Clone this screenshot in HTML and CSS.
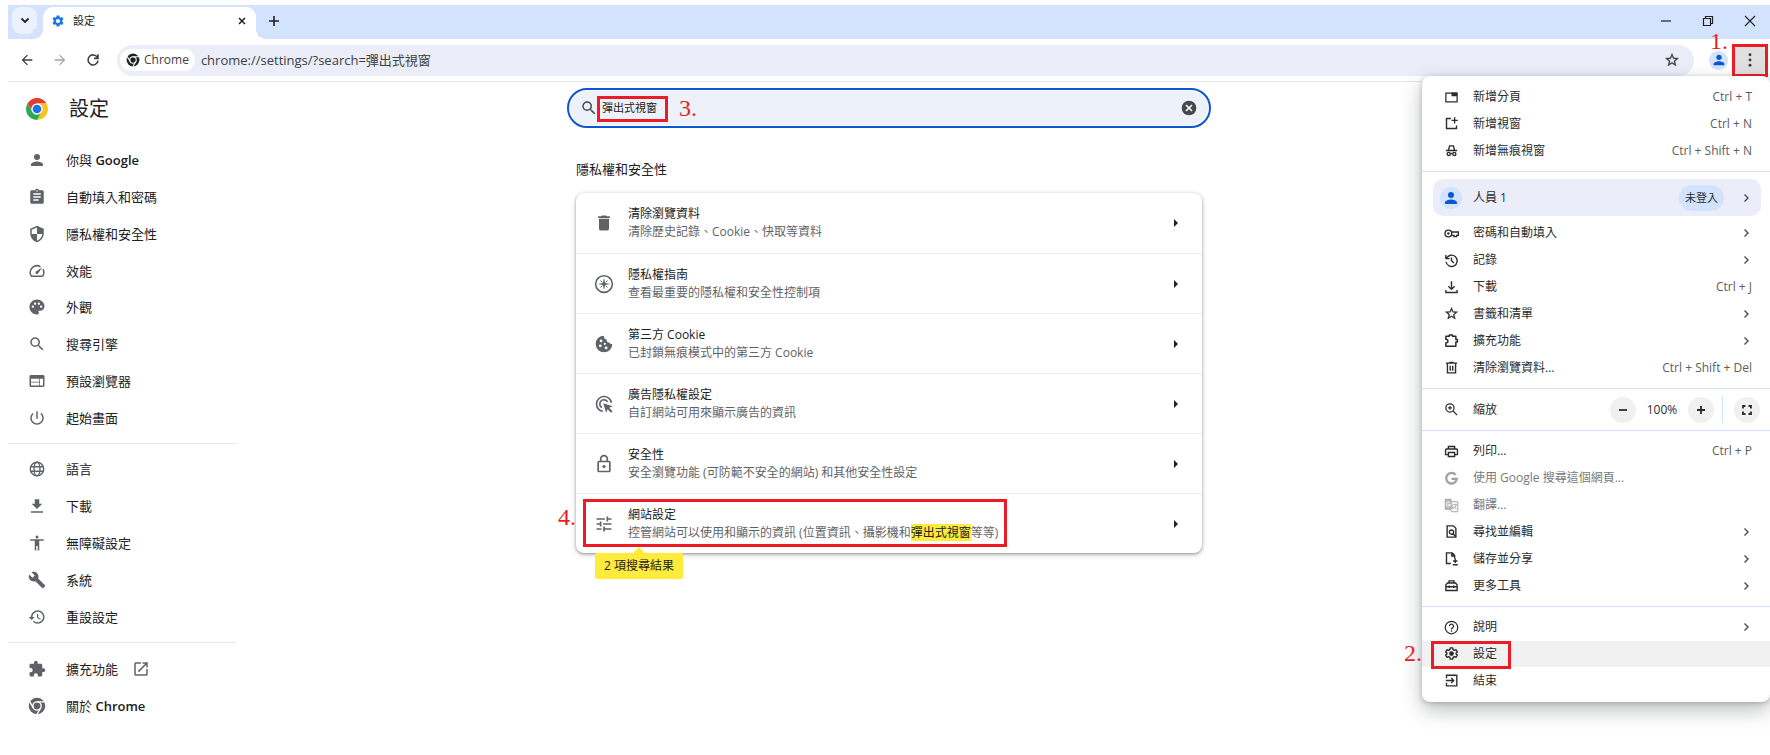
FILE: index.html
```html
<!DOCTYPE html>
<html lang="zh-Hant">
<head>
<meta charset="utf-8">
<title>設定</title>
<link rel="stylesheet" href="styles.css">
</head>
<body>
<svg class="sprite" aria-hidden="true">
  <symbol id="person" viewBox="0 0 24 24"><circle cx="12" cy="8" r="4"/><path d="M12 14c-2.670 0-8 1.340-8 4v2h16v-2c0-2.660-5.330-4-8-4z"/></symbol>
  <symbol id="assignment" viewBox="0 0 24 24"><path d="M19 3h-4.180C14.400 1.840 13.300 1 12 1c-1.300 0-2.400.840-2.820 2H5c-1.100 0-2 .9-2 2v14c0 1.100.9 2 2 2h14c1.100 0 2-.9 2-2V5c0-1.100-.9-2-2-2zm-7 0c.55 0 1 .45 1 1s-.45 1-1 1-1-.45-1-1 .45-1 1-1zm2 14H7v-2h7v2zm3-4H7v-2h10v2zm0-4H7V7h10v2z"/></symbol>
  <symbol id="shield" viewBox="0 0 24 24"><path d="M12 1L3 5v6c0 5.550 3.840 10.740 9 12 5.160-1.260 9-6.450 9-12V5l-9-4zm0 10.990h7c-.53 4.120-3.280 7.790-7 8.940V12H5V6.300l7-3.110v8.800z"/></symbol>
  <symbol id="speed" viewBox="0 0 24 24"><path d="M20.380 8.570l-1.230 1.850a8 8 0 0 1-.22 7.580H5.070A8 8 0 0 1 15.580 6.850l1.850-1.230A10 10 0 0 0 3.350 19a2 2 0 0 0 1.720 1h13.850a2 2 0 0 0 1.740-1 10 10 0 0 0-.27-10.440zm-9.790 6.840a2 2 0 0 0 2.830 0l5.660-8.490-8.490 5.660a2 2 0 0 0 0 2.830z"/></symbol>
  <symbol id="palette" viewBox="0 0 24 24"><path d="M12 2C6.490 2 2 6.490 2 12s4.490 10 10 10c1.380 0 2.500-1.120 2.500-2.500 0-.61-.23-1.200-.64-1.670-.08-.1-.13-.21-.13-.33 0-.28.22-.5.5-.5H16c3.310 0 6-2.690 6-6 0-4.960-4.490-9-10-9zm5.500 11c-.83 0-1.500-.67-1.500-1.500s.67-1.500 1.500-1.500 1.500.67 1.500 1.500-.67 1.500-1.500 1.500zm-3-4c-.83 0-1.500-.67-1.500-1.500S13.670 6 14.500 6s1.500.67 1.500 1.500S15.330 9 14.500 9zM5 11.500c0-.83.67-1.500 1.500-1.500s1.500.67 1.500 1.500S7.330 13 6.500 13 5 12.330 5 11.500zm6-4c0 .83-.67 1.500-1.500 1.500S8 8.330 8 7.500 8.670 6 9.500 6s1.500.67 1.500 1.500z"/></symbol>
  <symbol id="search" viewBox="0 0 24 24"><path d="M15.500 14h-.79l-.28-.27A6.470 6.470 0 0 0 16 9.500 6.500 6.500 0 1 0 9.500 16c1.610 0 3.090-.59 4.230-1.570l.27.28v.79l5 4.990L20.490 19l-4.990-5zm-6 0C7.010 14 5 11.990 5 9.500S7.010 5 9.500 5 14 7.010 14 9.500 11.990 14 9.500 14z"/></symbol>
  <symbol id="zoomin" viewBox="0 0 24 24"><g fill="none" stroke="currentColor" stroke-width="2"><circle cx="9.500" cy="9.500" r="6.500"/><path d="M14.500 14.500l6.500 6.500M9.500 6.500v6M6.500 9.500h6"/></g></symbol>
  <symbol id="web" viewBox="0 0 24 24"><path d="M20 4H4c-1.100 0-2 .9-2 2v12c0 1.100.9 2 2 2h16c1.100 0 2-.9 2-2V6c0-1.100-.9-2-2-2zm-5 14H4v-4h11v4zm0-5H4V9h11v4zm5 5h-4V9h4v9z"/></symbol>
  <symbol id="power" viewBox="0 0 24 24"><path d="M13 3h-2v10h2V3zm4.830 2.170l-1.420 1.420C17.990 7.860 19 9.810 19 12c0 3.870-3.130 7-7 7s-7-3.130-7-7c0-2.190 1.010-4.140 2.580-5.420L6.170 5.170C4.230 6.820 3 9.260 3 12c0 4.970 4.030 9 9 9s9-4.030 9-9c0-2.740-1.230-5.180-3.170-6.830z"/></symbol>
  <symbol id="globe" viewBox="0 0 24 24"><g fill="none" stroke="currentColor" stroke-width="1.800"><circle cx="12" cy="12" r="9"/><ellipse cx="12" cy="12" rx="4" ry="9"/><path d="M3.700 9h16.600M3.700 15h16.600"/></g></symbol>
  <symbol id="download" viewBox="0 0 24 24"><path d="M4 21h16v-2H4v2zM19 9h-4V3H9v6H5l7 7 7-7z"/></symbol>
  <symbol id="access" viewBox="0 0 24 24"><circle cx="12" cy="4" r="2"/><path d="M21 9h-6v13h-2v-6h-2v6H9V9H3V7h18v2z"/></symbol>
  <symbol id="wrench" viewBox="0 0 24 24"><path d="M22.700 19l-9.100-9.100c.9-2.300.4-5-1.500-6.900-2-2-5-2.400-7.400-1.300L9 6 6 9 1.600 4.700C.4 7.100.9 10.100 2.900 12.100c1.900 1.900 4.600 2.400 6.900 1.500l9.100 9.100c.4.4 1 .4 1.400 0l2.300-2.300c.5-.4.5-1.100.1-1.400z"/></symbol>
  <symbol id="history" viewBox="0 0 24 24"><path d="M13 3c-4.970 0-9 4.030-9 9H1l3.890 3.890.07.14L9 12H6c0-3.870 3.130-7 7-7s7 3.130 7 7-3.130 7-7 7c-1.930 0-3.680-.79-4.940-2.060l-1.420 1.420C8.270 19.990 10.510 21 13 21c4.970 0 9-4.030 9-9s-4.030-9-9-9zm-1 5v5l4.280 2.540.72-1.210-3.500-2.080V8H12z"/></symbol>
  <symbol id="puzzle" viewBox="0 0 24 24"><path d="M20.500 11H19V7c0-1.100-.9-2-2-2h-4V3.500C13 2.120 11.880 1 10.500 1S8 2.120 8 3.500V5H4c-1.100 0-2 .9-2 2v3.800h1.500c1.490 0 2.700 1.210 2.700 2.700s-1.210 2.700-2.700 2.700H2V20c0 1.100.9 2 2 2h3.800v-1.500c0-1.490 1.210-2.700 2.700-2.700 1.490 0 2.700 1.210 2.700 2.700V22H17c1.100 0 2-.9 2-2v-4h1.500c1.380 0 2.500-1.120 2.500-2.500S21.880 11 20.500 11z"/></symbol>
  <symbol id="external" viewBox="0 0 24 24"><path d="M19 19H5V5h7V3H5c-1.110 0-2 .9-2 2v14c0 1.100.89 2 2 2h14c1.100 0 2-.9 2-2v-7h-2v7zM14 3v2h3.590l-9.830 9.830 1.410 1.410L19 6.410V10h2V3h-7z"/></symbol>
  <symbol id="trash" viewBox="0 0 24 24"><path d="M6 19c0 1.100.9 2 2 2h8c1.100 0 2-.9 2-2V7H6v12zM19 4h-3.500l-1-1h-5l-1 1H5v2h14V4z"/></symbol>
  <symbol id="compass" viewBox="0 0 24 24"><circle cx="12" cy="12" r="10" fill="none" stroke="currentColor" stroke-width="1.900"/><path d="M12 4.500l1.300 6.200L19.500 12l-6.200 1.300L12 19.500l-1.300-6.200L4.500 12l6.200-1.300z"/><path d="M7.800 7.800l2.200 2.200M16.200 7.800L14 10M7.800 16.200L10 14M16.200 16.200L14 14" stroke="currentColor" stroke-width="1.200"/></symbol>
  <symbol id="cookie" viewBox="0 0 24 24"><path fill-rule="evenodd" d="M12 2a10 10 0 1 0 10 10c-1.600.4-2.900-.3-3.300-1.900-2.300.6-3.800-.8-3.300-3.100C12.900 6.500 11.700 4.400 12 2zM8.500 6.700a1.600 1.600 0 1 1 0 3.200 1.600 1.600 0 0 1 0-3.200zM7.500 12.500a1.700 1.700 0 1 1 0 3.400 1.700 1.700 0 0 1 0-3.400zM13 10.500a1.300 1.300 0 1 1 0 2.600 1.300 1.300 0 0 1 0-2.600zM14.500 15a1.700 1.700 0 1 1 0 3.400 1.700 1.700 0 0 1 0-3.400z"/></symbol>
  <symbol id="ads" viewBox="0 0 24 24"><g fill="none" stroke="currentColor" stroke-width="2"><path d="M10.500 20.900A9 9 0 1 1 20.900 10.500"/><path d="M9.500 16.300A5 5 0 1 1 16.300 9.500"/></g><path d="M11 11l11.500 3.700-4.300 1.900 4 4-1.800 1.800-4-4-1.800 4.200z"/></symbol>
  <symbol id="lock" viewBox="0 0 24 24"><g fill="none" stroke="currentColor" stroke-width="2"><rect x="5" y="9" width="14" height="12" rx="1"/><path d="M8 9V6a4 4 0 0 1 8 0v3"/></g><circle cx="12" cy="15" r="1.900"/></symbol>
  <symbol id="tune" viewBox="0 0 24 24"><path d="M3 17v2h6v-2H3zM3 5v2h10V5H3zm10 16v-2h8v-2h-8v-2h-2v6h2zM7 9v2H3v2h4v2h2V9H7zm14 4v-2H11v2h10zm-6-4h2V7h4V5h-4V3h-2v6z"/></symbol>
  <symbol id="gear" viewBox="0 0 24 24"><path d="M19.140 12.940c.04-.3.06-.61.06-.94 0-.32-.02-.64-.07-.94l2.030-1.580c.18-.14.23-.41.12-.61l-1.920-3.320c-.12-.22-.37-.29-.59-.22l-2.390.96c-.5-.38-1.030-.7-1.620-.94l-.36-2.540c-.04-.24-.24-.41-.48-.41h-3.840c-.24 0-.43.17-.47.41l-.36 2.540c-.59.24-1.130.57-1.620.94l-2.390-.96c-.22-.08-.47 0-.59.22L2.740 8.870c-.12.21-.08.47.12.61l2.030 1.580c-.05.3-.09.63-.09.94s.02.64.07.94l-2.030 1.580c-.18.14-.23.41-.12.61l1.920 3.320c.12.22.37.29.59.22l2.390-.96c.5.38 1.030.7 1.620.94l.36 2.540c.05.24.24.41.48.41h3.840c.24 0 .44-.17.47-.41l.36-2.540c.59-.24 1.130-.56 1.620-.94l2.390.96c.22.08.47 0 .59-.22l1.920-3.320c.12-.22.07-.47-.12-.61l-2.010-1.580zM12 15.600c-1.980 0-3.600-1.620-3.600-3.600s1.620-3.600 3.600-3.600 3.600 1.620 3.600 3.600-1.620 3.600-3.600 3.600z"/></symbol>
  <symbol id="gearline" viewBox="0 0 24 24"><path fill="none" stroke="currentColor" stroke-width="2.200" stroke-linejoin="round" d="M10 3h4l.6 2.900 1.900 1.100 2.800-1 2 3.500L19.200 11.500v1l2.100 2-2 3.500-2.800-1-1.900 1.100L14 21h-4l-.6-2.900L7.500 17l-2.800 1-2-3.500 2.100-2v-1l-2.100-2 2-3.500 2.800 1 1.900-1.100z"/><circle cx="12" cy="12" r="3.800"/></symbol>
  <symbol id="star" viewBox="0 0 24 24"><path stroke="currentColor" stroke-width=".5" d="M22 9.240l-7.190-.62L12 2 9.190 8.630 2 9.240l5.460 4.730L5.820 21 12 17.270 18.180 21l-1.630-7.030L22 9.240zM12 15.400l-3.760 2.270 1-4.280-3.320-2.880 4.380-.38L12 6.100l1.710 4.040 4.380.38-3.320 2.880 1 4.280L12 15.400z"/></symbol>
  <symbol id="tab" viewBox="0 0 24 24"><path fill="none" stroke="currentColor" stroke-width="2" d="M3 5h18v14H3z"/><path d="M12 4h9v6h-9z"/></symbol>
  <symbol id="newwin" viewBox="0 0 24 24"><path fill="none" stroke="currentColor" stroke-width="2.200" d="M11 4H4v16h16v-5M17 2v10M12 7h10"/></symbol>
  <symbol id="incognito" viewBox="0 0 24 24"><g fill="none" stroke="currentColor" stroke-width="2.200"><path d="M3 12h18M7 12L9 4.500h6l2 7.500M10 17.500q2-1.500 4 0"/><circle cx="7.500" cy="17.500" r="2.500"/><circle cx="16.500" cy="17.500" r="2.500"/></g></symbol>
  <symbol id="key" viewBox="0 0 24 24"><g fill="none" stroke="currentColor" stroke-width="2.200"><circle cx="7" cy="12" r="5.400"/><path d="M12 9.500h11v5.500h-3v2h-4v-2h-4"/></g><circle cx="7" cy="12" r="2"/></symbol>
  <symbol id="clock" viewBox="0 0 24 24"><path fill="none" stroke="currentColor" stroke-width="2.200" d="M3 3v6h6M4 8.500A9 9 0 1 1 3.200 14M12 7v5.500l4 3.500"/></symbol>
  <symbol id="save" viewBox="0 0 24 24"><path fill="none" stroke="currentColor" stroke-width="2.200" d="M12 2v13M7 10l5 5 5-5M3 16v4h18v-4"/></symbol>
  <symbol id="puzzleline" viewBox="0 0 24 24"><path fill="none" stroke="currentColor" stroke-width="2.400" stroke-linejoin="round" d="M3 5h5.500V3h5v2H19v5.500h2.500v4H19V21H3v-5l3-1v-4l-3-1z"/></symbol>
  <symbol id="bin" viewBox="0 0 24 24"><path fill="none" stroke="currentColor" stroke-width="2.200" d="M3 5h18M8.500 4h7M5.500 5v15.500h13V5M10 9v8M14 9v8"/></symbol>
  <symbol id="print" viewBox="0 0 24 24"><path fill="none" stroke="currentColor" stroke-width="2.200" d="M7 8V4h10v4M7 17H2.500V9.500Q2.500 8 4 8h16q1.500 0 1.500 1.500V17H17M7 13.500h10V20H7z"/></symbol>
  <symbol id="google" viewBox="0 0 24 24"><path fill="none" stroke="currentColor" stroke-width="3.600" d="M18.600 6A8.500 8.500 0 1 0 20.500 12.600H12"/></symbol>
  <symbol id="translate" viewBox="0 0 24 24"><path d="M2 2h9l1.500 4H22v16H12l-1.500-4H2z" fill="none" stroke="currentColor" stroke-width="1.500"/><path d="M2 2h9l4.500 16H2z" opacity=".75"/><path d="M9 7.500a3.200 3.200 0 1 0 1 2.800H7" fill="none" stroke="#fff" stroke-width="1.500"/><path d="M14.500 10.500H21M17.700 9v1.500M19.800 10.500q-1 4-4.300 6M15.500 13q2 3 4.500 4.500" fill="none" stroke="currentColor" stroke-width="1.300"/></symbol>
  <symbol id="find" viewBox="0 0 24 24"><g fill="none" stroke="currentColor" stroke-width="2.200"><path d="M15 3H5v18h14V7z"/><circle cx="12" cy="13" r="3.400"/><path d="M14.500 15.500l4 4.500"/></g></symbol>
  <symbol id="share" viewBox="0 0 24 24"><path fill="none" stroke="currentColor" stroke-width="2.200" d="M11 20H4V3h9l4 4v5M12.500 3v5H17M18 12v7M14.500 16h7M14 22h8"/></symbol>
  <symbol id="toolbox" viewBox="0 0 24 24"><path fill="none" stroke="currentColor" stroke-width="2.200" d="M8 8V4.500h8V8M3 20V11l2.500-3h13L21 11v9zM3 14h18M8.500 12v4M15.500 12v4"/></symbol>
  <symbol id="help" viewBox="0 0 24 24"><g fill="none" stroke="currentColor" stroke-width="2"><circle cx="12" cy="12" r="10"/><path d="M8.800 10a3.200 3.200 0 1 1 4.800 2.600q-1.600 1-1.600 2.400"/></g><circle cx="12" cy="17.500" r="1.300"/></symbol>
  <symbol id="exit" viewBox="0 0 24 24"><path fill="none" stroke="currentColor" stroke-width="2.200" d="M4 8.500V3.500h16.500v17H4v-5M3 12h12M11.500 8l4 4-4 4"/></symbol>
  <symbol id="chevron" viewBox="0 0 12 12"><path fill="none" stroke="currentColor" stroke-width="1.400" d="M4.500 2.500L8 6 4.500 9.500"/></symbol>
  <symbol id="down" viewBox="0 0 12 12"><path fill="none" stroke="currentColor" stroke-width="1.800" d="M2.500 4.500L6 8l3.500-3.500"/></symbol>
  <symbol id="close" viewBox="0 0 12 12"><path fill="none" stroke="currentColor" stroke-width="1.500" d="M3 3l6 6M9 3L3 9"/></symbol>
  <symbol id="plus" viewBox="0 0 12 12"><path fill="none" stroke="currentColor" stroke-width="1.600" d="M6 1v10M1 6h10"/></symbol>
  <symbol id="boldplus" viewBox="0 0 10 10"><path fill="none" stroke="currentColor" stroke-width="1.800" d="M5 1v8M1 5h8"/></symbol>
  <symbol id="boldminus" viewBox="0 0 10 10"><path fill="none" stroke="currentColor" stroke-width="1.800" d="M1 5h8"/></symbol>
  <symbol id="minus" viewBox="0 0 12 12"><path fill="none" stroke="currentColor" stroke-width="1.200" d="M1 6h10"/></symbol>
  <symbol id="back" viewBox="0 0 24 24"><path d="M20 11H7.830l5.590-5.590L12 4l-8 8 8 8 1.410-1.410L7.830 13H20v-2z"/></symbol>
  <symbol id="forward" viewBox="0 0 24 24"><path d="M12 4l-1.410 1.410L16.170 11H4v2h12.170l-5.580 5.590L12 20l8-8z"/></symbol>
  <symbol id="reload" viewBox="0 0 24 24"><path fill="none" stroke="currentColor" stroke-width="2.400" d="M18.500 8A7.500 7.500 0 1 0 19.500 13M19.500 3.500V9.500h-6"/></symbol>
  <symbol id="restore" viewBox="0 0 12 12"><path fill="none" stroke="currentColor" stroke-width="1.200" d="M1.500 3.500h7v7h-7zM3.500 3.500v-2h7v7h-2"/></symbol>
  <symbol id="winclose" viewBox="0 0 12 12"><path fill="none" stroke="currentColor" stroke-width="1.100" d="M1 1l10 10M11 1L1 11"/></symbol>
  <symbol id="dots" viewBox="0 0 24 24"><circle cx="12" cy="4" r="2.200"/><circle cx="12" cy="12" r="2.200"/><circle cx="12" cy="20" r="2.200"/></symbol>
  <symbol id="full" viewBox="0 0 24 24"><path fill="none" stroke="currentColor" stroke-width="3.600" d="M4 9V4h5M15 4h5v5M20 15v5h-5M9 20H4v-5"/></symbol>
  <symbol id="clear" viewBox="0 0 24 24"><circle cx="12" cy="12" r="11"/><path d="M7.500 7.500l9 9M16.500 7.500l-9 9" stroke="#fff" stroke-width="2.400"/></symbol>
  <symbol id="play" viewBox="0 0 12 12"><path d="M4 2l4 4-4 4z"/></symbol>
  <symbol id="chrome" viewBox="0 0 48 48"><path fill="#e33b2e" d="M24 13H43.050A22 22 0 0 0 4.950 13L14.470 29.500A11 11 0 0 1 24 13z"/><path fill="#fcc31e" d="M24 13H43.050A22 22 0 0 1 24 46L33.530 29.500A11 11 0 0 0 24 13z"/><path fill="#2da94f" d="M14.470 29.500L4.950 13A22 22 0 0 0 24 46L33.530 29.500A11 11 0 0 1 14.470 29.500z"/><circle cx="24" cy="24" r="11" fill="#fff"/><circle cx="24" cy="24" r="8.700" fill="#1a73e8"/></symbol>
  <symbol id="chromemono" viewBox="0 0 48 48"><circle cx="24" cy="24" r="22"/><circle cx="24" cy="24" r="11" fill="none" stroke="#fff" stroke-width="3.600"/><path d="M24 13H44M14.500 29.500L4.500 12.500M33.500 29.500L23.500 46.600" stroke="#fff" stroke-width="3.600"/></symbol>
</svg>

<header class="tabstrip">
  <button class="tab-search" aria-label="搜尋分頁"><svg class="i12"><use href="#down"/></svg></button>
  <div class="tab">
    <svg class="i14 blue"><use href="#gear"/></svg>
    <span class="tab-title">設定</span>
    <button class="bare" aria-label="關閉分頁"><svg class="i12"><use href="#close"/></svg></button>
  </div>
  <button class="bare new-tab" aria-label="新分頁"><svg class="i12"><use href="#plus"/></svg></button>
  <div class="window-controls">
    <button class="bare" aria-label="最小化"><svg class="i12"><use href="#minus"/></svg></button>
    <button class="bare" aria-label="還原"><svg class="i12"><use href="#restore"/></svg></button>
    <button class="bare" aria-label="關閉"><svg class="i12"><use href="#winclose"/></svg></button>
  </div>
</header>

<div class="toolbar">
  <div class="nav-buttons">
    <button class="bare" aria-label="上一頁"><svg class="i16"><use href="#back"/></svg></button>
    <button class="bare muted" aria-label="下一頁"><svg class="i16"><use href="#forward"/></svg></button>
    <button class="bare" aria-label="重新載入"><svg class="i16"><use href="#reload"/></svg></button>
  </div>
  <div class="omnibox">
    <span class="chip"><svg class="i14"><use href="#chromemono"/></svg>Chrome</span>
    <input class="url" type="text" aria-label="網址" value="chrome://settings/?search=彈出式視窗">
    <button class="bare" aria-label="加入書籤"><svg class="i16"><use href="#star"/></svg></button>
  </div>
  <button class="bare profile" aria-label="個人資料"><svg class="i16"><use href="#person"/></svg></button>
  <div class="menu-anchor">
    <button class="bare menu-button" aria-label="選單"><svg class="i16"><use href="#dots"/></svg></button>
    <span class="mark mark-1"></span><span class="step step-1">1.</span>
  </div>

  <div class="menu">
    <div class="menu-group">
      <button class="menu-item"><svg class="i15"><use href="#tab"/></svg><span>新增分頁</span><kbd>Ctrl + T</kbd></button>
      <button class="menu-item"><svg class="i15"><use href="#newwin"/></svg><span>新增視窗</span><kbd>Ctrl + N</kbd></button>
      <button class="menu-item"><svg class="i15"><use href="#incognito"/></svg><span>新增無痕視窗</span><kbd>Ctrl + Shift + N</kbd></button>
    </div>
    <hr>
    <button class="menu-item account"><span class="avatar"><svg class="i18"><use href="#person"/></svg></span><span>人員 1</span><em class="pill">未登入</em><svg class="i12 chev"><use href="#chevron"/></svg></button>
    <div class="menu-group six">
      <button class="menu-item"><svg class="i15"><use href="#key"/></svg><span>密碼和自動填入</span><svg class="i12 chev"><use href="#chevron"/></svg></button>
      <button class="menu-item"><svg class="i15"><use href="#clock"/></svg><span>記錄</span><svg class="i12 chev"><use href="#chevron"/></svg></button>
      <button class="menu-item"><svg class="i15"><use href="#save"/></svg><span>下載</span><kbd>Ctrl + J</kbd></button>
      <button class="menu-item"><svg class="i15"><use href="#star"/></svg><span>書籤和清單</span><svg class="i12 chev"><use href="#chevron"/></svg></button>
      <button class="menu-item"><svg class="i15"><use href="#puzzleline"/></svg><span>擴充功能</span><svg class="i12 chev"><use href="#chevron"/></svg></button>
      <button class="menu-item"><svg class="i15"><use href="#bin"/></svg><span>清除瀏覽資料...</span><kbd>Ctrl + Shift + Del</kbd></button>
    </div>
    <hr>
    <div class="menu-item zoom">
      <svg class="i15"><use href="#zoomin"/></svg><span>縮放</span>
      <button class="round" aria-label="縮小"><svg class="i10"><use href="#boldminus"/></svg></button>
      <output class="zoom-value">100%</output>
      <button class="round" aria-label="放大"><svg class="i10"><use href="#boldplus"/></svg></button>
      <i class="vline"></i>
      <button class="round" aria-label="全螢幕"><svg class="i12"><use href="#full"/></svg></button>
    </div>
    <hr>
    <div class="menu-group six">
      <button class="menu-item"><svg class="i15"><use href="#print"/></svg><span>列印...</span><kbd>Ctrl + P</kbd></button>
      <button class="menu-item" disabled><svg class="i15"><use href="#google"/></svg><span>使用 Google 搜尋這個網頁...</span></button>
      <button class="menu-item" disabled><svg class="i15"><use href="#translate"/></svg><span>翻譯...</span></button>
      <button class="menu-item"><svg class="i15"><use href="#find"/></svg><span>尋找並編輯</span><svg class="i12 chev"><use href="#chevron"/></svg></button>
      <button class="menu-item"><svg class="i15"><use href="#share"/></svg><span>儲存並分享</span><svg class="i12 chev"><use href="#chevron"/></svg></button>
      <button class="menu-item"><svg class="i15"><use href="#toolbox"/></svg><span>更多工具</span><svg class="i12 chev"><use href="#chevron"/></svg></button>
    </div>
    <hr>
    <div class="menu-group">
      <button class="menu-item"><svg class="i15"><use href="#help"/></svg><span>說明</span><svg class="i12 chev"><use href="#chevron"/></svg></button>
      <button class="menu-item active"><svg class="i15"><use href="#gearline"/></svg><span>設定</span><i class="mark mark-2"></i><b class="step step-2">2.</b></button>
      <button class="menu-item"><svg class="i15"><use href="#exit"/></svg><span>結束</span></button>
    </div>
  </div>
</div>

<div class="page">
  <aside class="sidebar">
    <h1 class="brand"><svg class="i24"><use href="#chrome"/></svg>設定</h1>
    <nav>
      <div class="nav-group eight">
        <a href="#"><svg class="i18"><use href="#person"/></svg><span>你與 <b>Google</b></span></a>
        <a href="#"><svg class="i18"><use href="#assignment"/></svg>自動填入和密碼</a>
        <a href="#"><svg class="i18"><use href="#shield"/></svg>隱私權和安全性</a>
        <a href="#"><svg class="i18"><use href="#speed"/></svg>效能</a>
        <a href="#"><svg class="i18"><use href="#palette"/></svg>外觀</a>
        <a href="#"><svg class="i18"><use href="#search"/></svg>搜尋引擎</a>
        <a href="#"><svg class="i18"><use href="#web"/></svg>預設瀏覽器</a>
        <a href="#"><svg class="i18"><use href="#power"/></svg>起始畫面</a>
      </div>
      <hr>
      <div class="nav-group five">
        <a href="#"><svg class="i18"><use href="#globe"/></svg>語言</a>
        <a href="#"><svg class="i18"><use href="#download"/></svg>下載</a>
        <a href="#"><svg class="i18"><use href="#access"/></svg>無障礙設定</a>
        <a href="#"><svg class="i18"><use href="#wrench"/></svg>系統</a>
        <a href="#"><svg class="i18"><use href="#history"/></svg>重設設定</a>
      </div>
      <hr>
      <div class="nav-group">
        <a href="#"><svg class="i18"><use href="#puzzle"/></svg><span>擴充功能</span><svg class="i18 external"><use href="#external"/></svg></a>
        <a href="#"><svg class="i18"><use href="#chromemono"/></svg><span>關於 <b>Chrome</b></span></a>
      </div>
    </nav>
  </aside>

  <main>
    <div class="search">
      <svg class="i18"><use href="#search"/></svg>
      <input type="text" aria-label="搜尋設定" value="彈出式視窗">
      <button class="bare" aria-label="清除搜尋"><svg class="i16"><use href="#clear"/></svg></button>
      <span class="mark mark-3"></span><span class="step step-3">3.</span>
    </div>
    <section class="results">
      <h2>隱私權和安全性</h2>
      <div class="card">
        <button class="row"><svg class="i20"><use href="#trash"/></svg><span class="text"><span>清除瀏覽資料</span><small>清除歷史記錄、Cookie、快取等資料</small></span><svg class="i12 arrow"><use href="#play"/></svg></button>
        <button class="row"><svg class="i20"><use href="#compass"/></svg><span class="text"><span>隱私權指南</span><small>查看最重要的隱私權和安全性控制項</small></span><svg class="i12 arrow"><use href="#play"/></svg></button>
        <button class="row"><svg class="i20"><use href="#cookie"/></svg><span class="text"><span>第三方 Cookie</span><small>已封鎖無痕模式中的第三方 Cookie</small></span><svg class="i12 arrow"><use href="#play"/></svg></button>
        <button class="row"><svg class="i20"><use href="#ads"/></svg><span class="text"><span>廣告隱私權設定</span><small>自訂網站可用來顯示廣告的資訊</small></span><svg class="i12 arrow"><use href="#play"/></svg></button>
        <button class="row"><svg class="i20"><use href="#lock"/></svg><span class="text"><span>安全性</span><small>安全瀏覽功能 (可防範不安全的網站) 和其他安全性設定</small></span><svg class="i12 arrow"><use href="#play"/></svg></button>
        <button class="row"><svg class="i20"><use href="#tune"/></svg><span class="text"><span>網站設定</span><small>控管網站可以使用和顯示的資訊 (位置資訊、攝影機和<mark>彈出式視窗</mark>等等)</small></span><svg class="i12 arrow"><use href="#play"/></svg></button>
        <div class="bubble">2 項搜尋結果</div>
        <span class="mark mark-4"></span><span class="step step-4">4.</span>
      </div>
    </section>
  </main>
</div>
</body>
</html>
```
FILE: styles.css
```css
* { box-sizing: border-box; }

body {
  margin: 0;
  padding: 5px 0 0 8px;
  min-height: 100vh;
  overflow: hidden;
  background: #fff;
  color: #202124;
  font: 12px/18px "Open Sans", "Noto Sans CJK TC", sans-serif;
}

button, input { font: inherit; color: inherit; }
button { cursor: pointer; }
svg { display: block; flex: none; fill: currentColor; }
.sprite { position: absolute; width: 0; height: 0; }

.i10 { width: 10px; height: 10px; }
.i12 { width: 12px; height: 12px; }
.i14 { width: 14px; height: 14px; }
.i15 { width: 15px; height: 15px; }
.i16 { width: 16px; height: 16px; }
.i18 { width: 18px; height: 18px; }
.i20 { width: 20px; height: 20px; }
.i24 { width: 24px; height: 24px; }
.blue { color: #1a73e8; }

.bare {
  display: flex;
  align-items: center;
  justify-content: center;
  padding: 0;
  border: 0;
  background: none;
}
.muted { color: #a5a6a8; }

/* tab strip */
.tabstrip {
  display: flex;
  align-items: center;
  height: 34px;
  padding-left: 4px;
  background: #d3e3fd;
}
.tab-search {
  display: flex;
  align-items: center;
  justify-content: center;
  width: 25px;
  height: 27px;
  margin-bottom: 4px;
  padding: 0;
  border: 0;
  border-radius: 9px;
  background: #ebf2fe;
}
.tab {
  position: relative;
  display: flex;
  align-items: center;
  align-self: flex-end;
  gap: 8px;
  width: 213px;
  height: 32px;
  margin-left: 6px;
  padding: 0 8px 4px;
  border-radius: 10px 10px 0 0;
  background: #fff;
  font-size: 11px;
}
.tab::before, .tab::after {
  content: "";
  position: absolute;
  bottom: 0;
  width: 10px;
  height: 10px;
}
.tab::before { right: 100%; background: radial-gradient(circle at 0 0, #d3e3fd 10px, #fff 10px); }
.tab::after { left: 100%; background: radial-gradient(circle at 100% 0, #d3e3fd 10px, #fff 10px); }
.tab-title { flex: 1; }
.new-tab { margin: 0 0 3px 12px; }
.window-controls {
  display: flex;
  gap: 30px;
  margin: 0 14px 2px auto;
}

/* toolbar */
.toolbar {
  position: relative;
  z-index: 2;
  display: flex;
  align-items: center;
  height: 43px;
  border-bottom: 1px solid #e4e5e7;
  background: #fff;
  color: #3c4043;
}
.nav-buttons { display: flex; gap: 17px; padding: 0 16px 0 11px; }
.omnibox {
  display: flex;
  flex: 1;
  align-items: center;
  height: 31px;
  padding: 0 14px 0 3px;
  border-radius: 16px;
  background: #ebeef8;
}
.chip {
  display: flex;
  align-items: center;
  gap: 4px;
  height: 22px;
  padding: 0 6px;
  border-radius: 11px;
  background: #fff;
}
.chip svg { color: #202124; }
.url {
  flex: 1;
  margin: 0 8px 0 6px;
  padding: 0;
  border: 0;
  outline: 0;
  background: none;
  font-size: 13px;
}
.profile {
  width: 19px;
  height: 19px;
  margin: 0 4px 0 15px;
  border-radius: 50%;
  background: #d3e3fd;
  color: #0b57d0;
}
.menu-anchor { position: relative; margin-right: 2px; }
.menu-button {
  width: 36px;
  height: 31px;
  border-radius: 12px;
  background: #e0e0e0;
}

/* main menu */
.menu {
  position: absolute;
  top: 37px;
  right: 0;
  width: 348px;
  padding: 8px 0;
  border-radius: 8px;
  background: #fff;
  color: #2b2c2e;
  box-shadow: 0 8px 20px rgba(60, 64, 67, .34), 0 1px 5px rgba(60, 64, 67, .28);
}
.menu hr { margin: 7px 0; border: 0; border-top: 1px solid #d3e3fd; }
.menu-group { display: grid; grid-auto-rows: 1fr; min-height: 80px; }
.menu-group.six { min-height: 161px; }
.menu-item {
  position: relative;
  display: flex;
  align-items: center;
  width: 100%;
  padding: 0 18px 0 22px;
  border: 0;
  background: none;
  text-align: left;
}
.menu-item > span:not(.avatar) { flex: 1; margin-left: 14px; }
.menu-item kbd { font: inherit; color: #5a5c5f; }
.menu-item[disabled] { color: #77797c; }
.menu-item[disabled] svg { color: #9fa1a4; }
.menu-item.active { background: #f1f1f1; }
.chev { color: #4a4c4f; }
.account {
  width: auto;
  min-width: calc(100% - 20px);
  height: 37px;
  margin: 0 9px 4px 11px;
  padding: 0 9px 0 7px;
  border-radius: 10px;
  background: #ebeef8;
}
.menu-item.account > span:not(.avatar) { margin-left: 11px; }
.avatar {
  display: grid;
  place-items: center;
  width: 22px;
  height: 22px;
  border-radius: 50%;
  background: #d3e3fd;
  color: #0b57d0;
}
.pill {
  margin-right: 16px;
  padding: 4px 6px;
  border-radius: 13px;
  background: #d3e3fd;
  font-size: 11px;
  font-style: normal;
}
.zoom { height: 27px; padding-right: 10px; }
.round {
  display: grid;
  place-items: center;
  width: 26px;
  height: 26px;
  padding: 0;
  border: 0;
  border-radius: 50%;
  background: #f0f0f0;
}
.zoom-value { width: 52px; text-align: center; }
.vline { width: 1px; height: 27px; margin: 0 11px 0 8px; background: #d3e3fd; }

/* settings page */
.page {
  display: grid;
  grid-template-columns: 228px minmax(0, 1fr) 228px;
}
.brand {
  display: flex;
  align-items: center;
  gap: 20px;
  height: 53px;
  margin: 0 0 7px;
  padding-left: 17px;
  font-size: 20px;
  font-weight: 400;
  line-height: 28px;
}
.nav-group { display: grid; grid-auto-rows: 1fr; min-height: 74px; }
.nav-group.eight { min-height: 294px; }
.nav-group.five { min-height: 184px; }
.nav-group a {
  display: flex;
  align-items: center;
  gap: 20px;
  padding-left: 20px;
  color: #202124;
  font-size: 13px;
  text-decoration: none;
}
.nav-group svg { color: #5f6368; }
.nav-group .external { margin-left: -6px; }
.nav-group b { font-weight: 600; }
.sidebar hr { margin: 7px 0; border: 0; border-top: 1px solid #e8e9eb; }

main { padding-top: 6px; }
.search {
  position: relative;
  display: flex;
  align-items: center;
  max-width: 644px;
  height: 40px;
  margin: 0 auto;
  padding: 0 12px 0 11px;
  border: 2px solid #0b57d0;
  border-radius: 20px;
  background: #ecf1fa;
  box-shadow: inset 0 0 0 1px #fff;
}
.search input {
  flex: 1;
  min-width: 0;
  margin-left: 4px;
  padding: 0;
  border: 0;
  outline: 0;
  background: none;
  font-size: 11px;
}
.search svg { color: #47484b; }
.results { max-width: 626px; margin: 0 auto; }
.results h2 { margin: 32px 0 15px; font-size: 13px; font-weight: 400; line-height: 18px; }
.card {
  position: relative;
  border-radius: 8px;
  background: #fff;
  box-shadow: 0 1px 3px rgba(60, 64, 67, .5), 0 2px 6px rgba(60, 64, 67, .16);
}
.row {
  display: flex;
  align-items: center;
  width: 100%;
  min-height: 60px;
  padding: 0 20px 0 18px;
  border: 0;
  background: none;
  text-align: left;
}
.row + .row { border-top: 1px solid #ebecee; }
.row svg { color: #5f6368; }
.row .arrow { color: #202124; }
.text { display: grid; flex: 1; margin-left: 14px; }
.text small { color: #5f6368; font-size: 12px; }
.text mark { background: #ffeb3b; color: #202124; }
.bubble {
  position: absolute;
  left: 19px;
  top: 100%;
  padding: 4px 9px;
  border-radius: 2px;
  background: #ffeb3b;
}
.bubble::before {
  content: "";
  position: absolute;
  left: 50%;
  bottom: 100%;
  margin-left: -6px;
  border: 6px solid transparent;
  border-top: 0;
  border-bottom-color: #ffeb3b;
}

/* tutorial annotations */
.mark { position: absolute; border: 3px solid #ed1c24; pointer-events: none; }
.step {
  position: absolute;
  color: #ed1c24;
  font: 24px/24px "Liberation Serif", serif;
}
.mark-1 { inset: -1px 0; }
.step-1 { top: -16px; right: 40px; }
.mark-2 { top: 0; left: 9px; width: 80px; height: 28px; }
.step-2 { top: 0; right: 100%; }
.mark-3 { top: 6px; left: 28px; width: 71px; height: 26px; }
.step-3 { top: 6px; left: 110px; }
.mark-4 { left: 7px; bottom: 6px; width: 424px; height: 48px; }
.step-4 { right: 100%; bottom: 24px; }
```
